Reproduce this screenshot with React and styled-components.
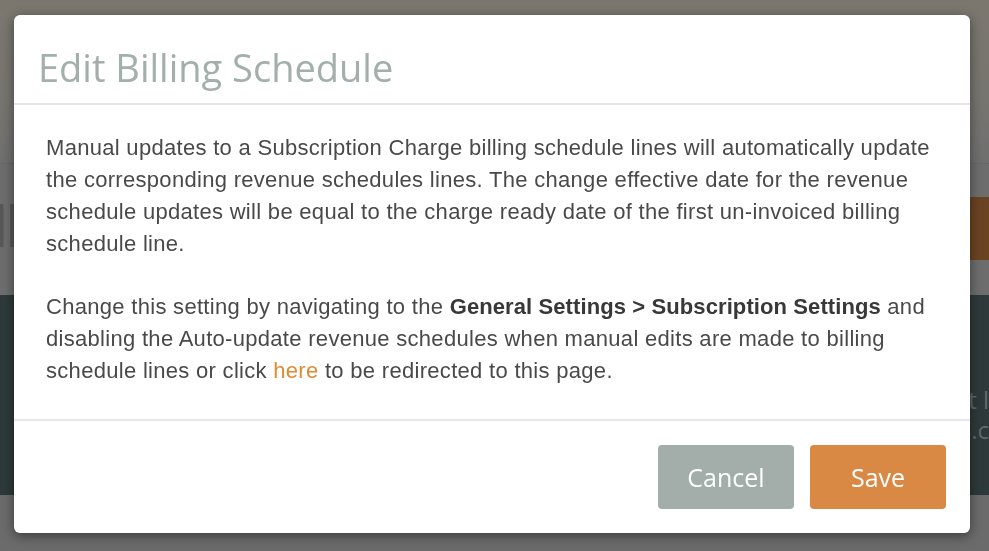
import styled, { createGlobalStyle } from 'styled-components';

const GlobalStyle = createGlobalStyle`
    html, body {
        margin: 0;
        padding: 0;
        width: 100%;
        height: 100%;
        overflow: hidden;
    }
    body {
        font-family: "Liberation Sans", Arial, sans-serif;
        background-color: #6b6b6b;
    }
`;

export default function App() {
    return (
        <>
            <GlobalStyle />
            <Page>
                <TopBar />
                <TitleBand>
                    <PageTitle>ll</PageTitle>
                    <ActionButton />
                </TitleBand>
                <DarkBand>
                    <DarkText>Last l</DarkText>
                    <DarkText>info.c</DarkText>
                </DarkBand>
            </Page>
            <Overlay>
                <Modal>
                    <Header>
                        <Title>Edit Billing Schedule</Title>
                    </Header>
                    <Body>
                        <Paragraph>
                            Manual updates to a Subscription Charge billing schedule lines will automatically update<br />
                            the corresponding revenue schedules lines. The change effective date for the revenue<br />
                            schedule updates will be equal to the charge ready date of the first un-invoiced billing<br />
                            schedule line.
                        </Paragraph>
                        <Paragraph>
                            Change this setting by navigating to the <strong>General Settings &gt; Subscription Settings</strong> and<br />
                            disabling the Auto-update revenue schedules when manual edits are made to billing<br />
                            schedule lines or click <Link href="#">here</Link> to be redirected to this page.
                        </Paragraph>
                    </Body>
                    <Footer>
                        <Button variant="cancel">Cancel</Button>
                        <Button variant="save">Save</Button>
                    </Footer>
                </Modal>
            </Overlay>
        </>
    );
}

const Page = styled.div`
    display: flex;
    flex-direction: column;
    width: 100%;
    height: 551px;
    background-color: #6b6b6b;
`;

const TopBar = styled.div`
    height: 163px;
    background: linear-gradient(#7b776f, #77756f 60%, #6f6f6f);
    border-bottom: 1px solid #666;
`;

const TitleBand = styled.div`
    display: flex;
    justify-content: space-between;
    align-items: flex-start;
    height: 131px;
    padding-top: 33px;
    box-sizing: border-box;
    background-color: #6d6d6d;
`;

const PageTitle = styled.div`
    margin-left: -6px;
    margin-top: -2px;
    font-family: "Open Sans", sans-serif;
    font-size: 56px;
    line-height: 60px;
    letter-spacing: -3px;
    color: #575757;
`;

const ActionButton = styled.div`
    width: 120px;
    height: 63px;
    background-color: #6a4322;
`;

const DarkBand = styled.div`
    display: flex;
    flex-direction: column;
    align-items: flex-end;
    height: 200px;
    padding-top: 90px;
    box-sizing: border-box;
    background-color: #2d393a;
    overflow: hidden;
`;

const DarkText = styled.div`
    margin-right: 0;
    font-family: "Open Sans", sans-serif;
    font-size: 24px;
    line-height: 30px;
    color: #5f696a;
`;

const Overlay = styled.div`
    position: fixed;
    inset: 0;
    display: flex;
    align-items: flex-start;
    padding: 15px 0 0 14px;
`;

const Modal = styled.div`
    display: flex;
    flex-direction: column;
    width: 956px;
    height: 518px;
    background-color: #fff;
    border-radius: 6px;
    box-shadow: 0 3px 12px rgba(0, 0, 0, 0.45);
    overflow: hidden;
`;

const Header = styled.div`
    display: flex;
    align-items: center;
    height: 88px;
    padding: 0 24px;
    border-bottom: 2px solid #e6e6e6;
`;

const Title = styled.h2`
    margin: 0;
    margin-top: 16px;
    font-family: "Open Sans", sans-serif;
    font-weight: 400;
    font-size: 38px;
    letter-spacing: 0;
    color: #a3afab;
`;

const Body = styled.div`
    display: flex;
    flex-direction: column;
    gap: 31px;
    padding: 27px 32px 32px;
    border-bottom: 2px solid #e8e8e8;
`;

const Paragraph = styled.p`
    margin: 0;
    font-size: 22px;
    line-height: 32px;
    letter-spacing: 0.3px;
    white-space: nowrap;
    color: #494949;

    strong {
        color: #383838;
        letter-spacing: 0.1px;
    }
`;

const Link = styled.a`
    color: #e08a32;
    text-decoration: none;
`;

const Footer = styled.div`
    display: flex;
    justify-content: flex-end;
    gap: 16px;
    padding: 24px 24px;
`;

const Button = styled.button`
    width: 136px;
    height: 64px;
    border: none;
    border-radius: 4px;
    font-family: "Open Sans", sans-serif;
    font-size: 25px;
    color: #fff;
    background-color: ${({ variant }) => (variant === 'save' ? '#d98944' : '#a3ada9')};
    cursor: pointer;
`;
